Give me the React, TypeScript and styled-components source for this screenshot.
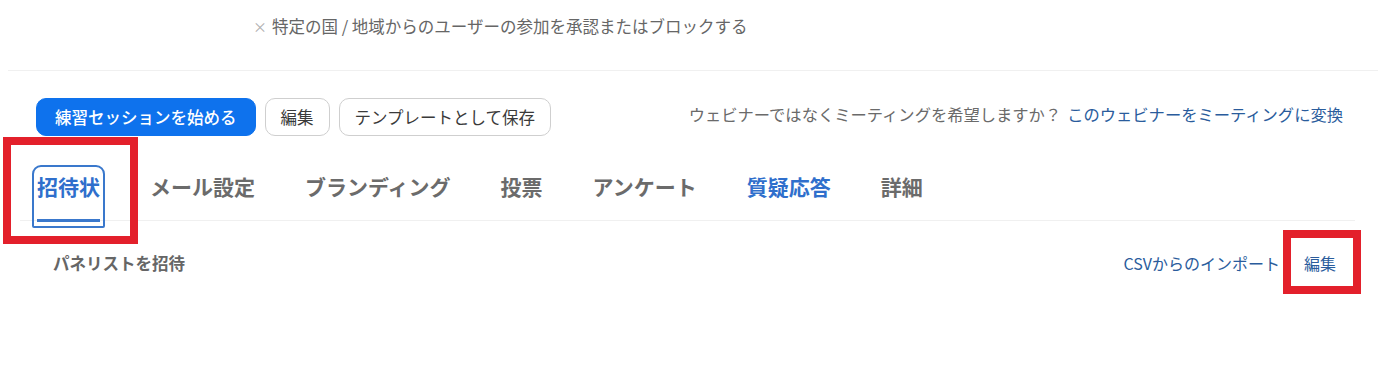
import React from "react";
import styled, { createGlobalStyle } from "styled-components";

const GlobalStyle = createGlobalStyle`
  html, body {
    margin: 0;
    padding: 0;
    background: #ffffff;
    font-family: "Noto Sans CJK JP", "Noto Sans", sans-serif;
  }
  * { box-sizing: border-box; }
`;

const Page = styled.div`
  position: relative;
  width: 1378px;
  height: 380px;
  overflow: hidden;
  background: #fff;
`;

const Notice = styled.div`
  margin-left: 8px;
  height: 71px;
  padding: 15px 0 0 245px;
  border-bottom: 1px solid #f0f0f0;
  display: flex;
  align-items: flex-start;
  gap: 5px;
  font-size: 16.5px;
  line-height: 22px;
  color: #666;
`;

const CloseMark = styled.span`
  color: #b0b0b0;
  font-size: 14px;
  line-height: 22px;
`;

const ActionRow = styled.div`
  margin-top: 27px;
  padding: 0 35px 0 36px;
  display: flex;
  align-items: center;
  height: 38px;
`;

const Button = styled.button<{ $primary?: boolean }>`
  height: 38px;
  padding: ${(p) => (p.$primary ? "0 18px" : "0 15px")};
  margin-right: 9px;
  border-radius: 10px;
  font-family: inherit;
  font-size: 16.5px;
  line-height: 22px;
  cursor: pointer;
  border: 1px solid ${(p) => (p.$primary ? "#0e72ed" : "#cfcfcf")};
  background: ${(p) => (p.$primary ? "#0e72ed" : "#ffffff")};
  color: ${(p) => (p.$primary ? "#ffffff" : "#3a3a3a")};
  font-weight: ${(p) => (p.$primary ? 500 : 400)};
`;

const Spacer = styled.div`
  flex: 1;
`;

const Hint = styled.div`
  font-size: 16.3px;
  line-height: 22px;
  color: #6a6a6a;
  margin-bottom: 6px;
`;

const Link = styled.a`
  color: #2a5c9c;
  text-decoration: none;
  margin-left: 6px;
`;

const TabBar = styled.div`
  margin: 29px 23px 0 20px;
  padding-left: 17px;
  display: flex;
  gap: 50px;
  border-bottom: 1px solid #f0f0f0;
`;

const Tab = styled.div<{ $active?: boolean; $blue?: boolean }>`
  position: relative;
  height: 55px;
  padding-top: 7px;
  font-size: 21px;
  line-height: 28px;
  font-weight: 700;
  color: ${(p) => (p.$active || p.$blue ? "#2f6fcc" : "#6b6b6b")};
  white-space: nowrap;

  ${(p) =>
    p.$active &&
    `
    &::before {
      content: "";
      position: absolute;
      top: 0;
      left: -5px;
      right: -5px;
      bottom: -8px;
      border: 2px solid #3a78cc;
      border-radius: 9px 9px 2px 2px;
    }
    &::after {
      content: "";
      position: absolute;
      left: 0;
      right: 0;
      bottom: -2px;
      height: 3px;
      background: #3a78cc;
    }
  `}
`;

const SubRow = styled.div`
  margin-top: 30px;
  padding: 0 42px 0 53px;
  display: flex;
  align-items: center;
  height: 24px;
`;

const SubTitle = styled.div`
  font-size: 16.5px;
  line-height: 24px;
  font-weight: 700;
  color: #666;
`;

const SubLink = styled.a`
  font-size: 16px;
  line-height: 24px;
  color: #2a5c9c;
  text-decoration: none;
  margin-left: 24px;
`;

const Highlight = styled.div<{ $x: number; $y: number; $w: number; $h: number }>`
  position: absolute;
  left: ${(p) => p.$x}px;
  top: ${(p) => p.$y}px;
  width: ${(p) => p.$w}px;
  height: ${(p) => p.$h}px;
  border: 8px solid #e3202b;
  pointer-events: none;
`;

export default function App() {
  const tabs = [
    { label: "招待状", active: true },
    { label: "メール設定" },
    { label: "ブランディング" },
    { label: "投票" },
    { label: "アンケート" },
    { label: "質疑応答", blue: true },
    { label: "詳細" },
  ];
  return (
    <Page>
      <GlobalStyle />
      <Notice>
        <CloseMark>×</CloseMark>
        <span>特定の国 / 地域からのユーザーの参加を承認またはブロックする</span>
      </Notice>
      <ActionRow>
        <Button $primary>練習セッションを始める</Button>
        <Button>編集</Button>
        <Button>テンプレートとして保存</Button>
        <Spacer />
        <Hint>
          ウェビナーではなくミーティングを希望しますか？
          <Link href="#">このウェビナーをミーティングに変換</Link>
        </Hint>
      </ActionRow>
      <TabBar>
        {tabs.map((t) => (
          <Tab key={t.label} $active={t.active} $blue={t.blue}>
            {t.label}
          </Tab>
        ))}
      </TabBar>
      <SubRow>
        <SubTitle>パネリストを招待</SubTitle>
        <Spacer />
        <SubLink href="#">CSVからのインポート</SubLink>
        <SubLink href="#">編集</SubLink>
      </SubRow>
      <Highlight $x={3} $y={137} $w={135} $h={107} />
      <Highlight $x={1283} $y={230} $w={78} $h={64} />
    </Page>
  );
}
